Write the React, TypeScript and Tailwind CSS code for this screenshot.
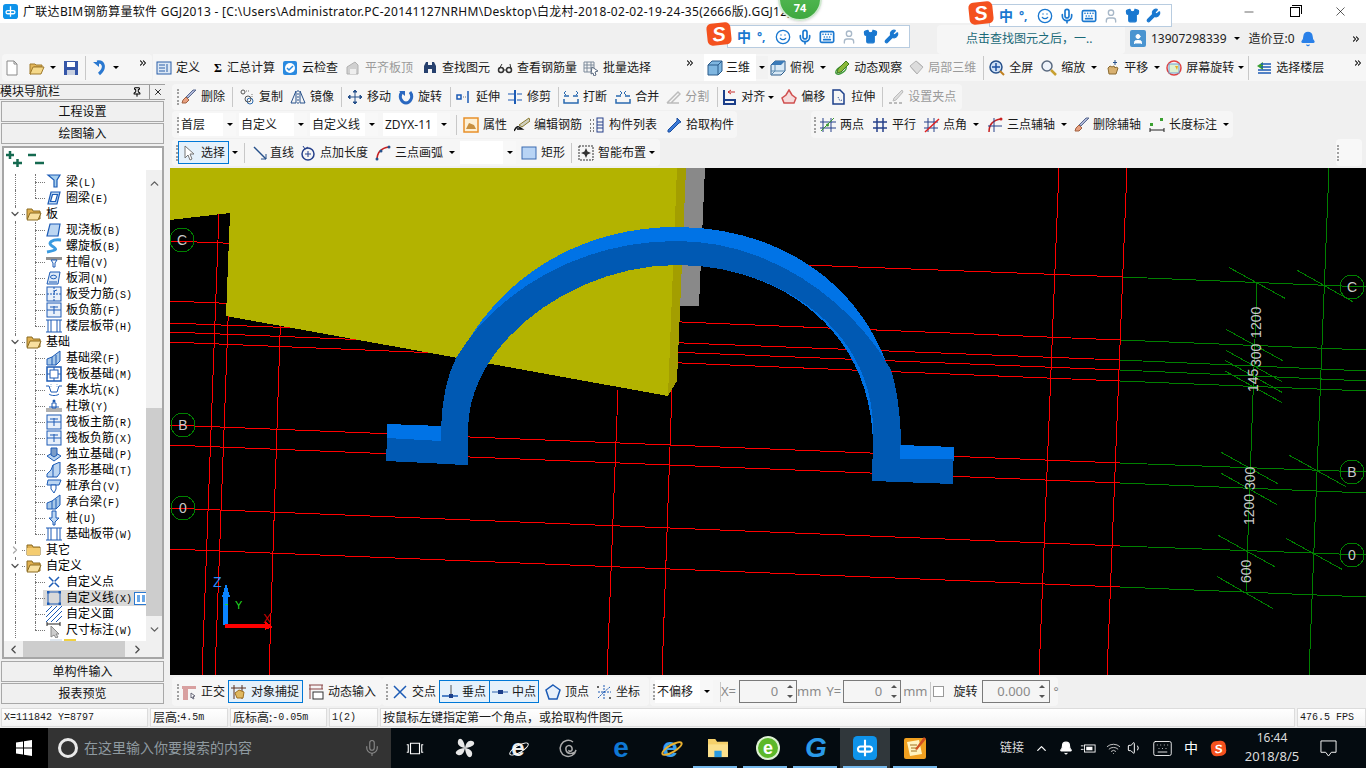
import React from 'react';
import clsx from 'clsx';
import { Mic, ChevronUp, ChevronDown, ChevronLeft, ChevronRight, ChevronsRight, Pin, X as XIcon, Minus, Bell, Wifi, Volume1, Keyboard, User, Shirt, Wrench, Smile } from 'lucide-react';

const Ic = ({ children, className }: { children: React.ReactNode; className?: string }) => (
  <svg viewBox="0 0 16 16" fill="none" className={clsx('w-4 h-4 shrink-0', className)}>{children}</svg>
);

const B = '#1c5bb5';
const Drop = ({ className }: { className?: string }) => (
  <span className={clsx('w-0 h-0 shrink-0 border-x-[3px] border-t-[3px] border-x-transparent border-t-black', className)} />
);
const Sep = ({ className }: { className?: string }) => <span className={clsx('w-px h-5 bg-[#c8c8c8] shrink-0', className)} />;
const Grip = ({ className }: { className?: string }) => <span className={clsx('h-4 border-l-2 border-dotted border-[#a0a0a0] shrink-0', className)} />;
const More = ({ className }: { className?: string }) => <ChevronsRight size={10} strokeWidth={2.5} className={clsx('shrink-0 self-start mt-1 text-black', className)} />;

const Tool = ({ icon, label, gray, className }: { icon?: React.ReactNode; label: string; gray?: boolean; className?: string }) => (
  <div className={clsx('flex items-center gap-1 shrink-0', gray ? 'text-[#9a9a9a]' : 'text-[#1a1a1a]', className)}>
    {icon}
    <span className="whitespace-nowrap">{label}</span>
  </div>
);

// app logo, white cross with a loop on each side
const Logo = ({ className }: { className: string }) => (
  <svg viewBox="0 0 16 16" className={className}>
    <rect width="16" height="16" rx="3" fill="#0e93ea" />
    <path d="M8 2.500V7H5A1.700 1.700 0 1 0 5 10.400H11A1.700 1.700 0 1 0 11 7H8V13.500" stroke="#fff" strokeWidth="1.400" fill="none" />
  </svg>
);

// ---- toolbar icons
const I = {
  page: <Ic className="ml-[2px]"><path d="M3 1h7l3 3v11H3z" fill="#fff" stroke="#8a8a8a" /><path d="M10 1v3h3" stroke="#8a8a8a" /></Ic>,
  open: <Ic className="ml-[9px]"><path d="M1 4h5l1 1h6v2H5L2 14H1z" fill="#e2b65a" stroke="#a07a2c" /><path d="M4 7h11l-3 7H1z" fill="#f5d98a" stroke="#a07a2c" /></Ic>,
  save: <Ic className="ml-[7px]"><rect x="1" y="1" width="14" height="14" fill="#3556a8" /><rect x="4" y="2" width="8" height="5" fill="#fff" /><rect x="4" y="10" width="8" height="5" fill="#c8d0e0" /></Ic>,
  undo: <Ic className="ml-[6px]"><path d="M5 2C12 1 14 8 7 14" stroke="#2a78d0" strokeWidth="3" /><path d="M1 2h6v5" fill="#2a78d0" /></Ic>,
  define: <Ic><rect x="1" y="2" width="14" height="12" fill="#dce8f5" stroke="#2a5fa8" /><path d="M3 5h6M3 8h6M3 11h6M11 4v8" stroke="#2a5fa8" /></Ic>,
  cloud: <Ic><rect x="1" y="1" width="14" height="14" rx="2" fill="#2a8ae0" /><circle cx="8" cy="8" r="5" fill="#fff" /><path d="M5 8l2 2 4-4" stroke="#2a8ae0" strokeWidth="1.5" /></Ic>,
  level: <Ic><path d="M2 14V7l8-5 3 3v9z" fill="#d0d0d0" stroke="#b0b0b0" /><path d="M5 9h6v5H5z" fill="#eee" /></Ic>,
  binoc: <Ic><path d="M2 13V6l2-4h2v11zM14 13V6l-2-4h-2v11z" fill="#26406e" /><rect x="6" y="5" width="4" height="4" fill="#26406e" /></Ic>,
  glass: <Ic><circle cx="4" cy="10" r="2.5" stroke="#333" strokeWidth="1.5" /><circle cx="12" cy="10" r="2.5" stroke="#333" strokeWidth="1.5" /><path d="M6 10h4M2 9l3-5M14 9l-1-5" stroke="#333" /></Ic>,
  batch: <Ic><path d="M1 2h10v10H1zM1 5h10M1 8h10M4 2v10M8 2v10" stroke="#7d8a9a" /><path d="M9 7l6 4-3 1 1 3-2 1-1-3-2 1z" fill="#fff" stroke="#5a6a80" /></Ic>,
  cube: <Ic><path d="M1 5l4-4h10v10l-4 4H1z" fill="#7fb6e0" stroke="#2a5a8a" /><path d="M1 5h10v10M11 5l4-4" stroke="#2a5a8a" /></Ic>,
  cubeTop: <Ic><path d="M1 5l4-4h10v10l-4 4H1z" fill="#d8e8f5" stroke="#2a5a8a" /><path d="M5 1v10H1M5 11l-4 4M5 11h10" stroke="#5a8ab0" /><path d="M1 5l4-4h10l-4 4z" fill="#3a7ab8" /></Ic>,
  orbit: <Ic><ellipse cx="7" cy="10" rx="6" ry="3" stroke="#3f9a3a" strokeWidth="1.5" transform="rotate(-35 7 10)" /><path d="M12 1l3 3-8 8-4 1 1-4z" fill="#8ab83a" stroke="#3f7a20" /></Ic>,
  cubeGray: <Ic><path d="M2 6l6-5 7 6-6 7z" fill="#dcdcdc" stroke="#b5b5b5" /><path d="M2 6l7 8M8 1l7 6" stroke="#b5b5b5" /></Ic>,
  zoomFull: <Ic><circle cx="7" cy="7" r="6" fill="#cfe0f5" stroke="#26508a" strokeWidth="1.5" /><path d="M7 3v8M3 7h8" stroke="#1c4fa0" strokeWidth="1.5" /><path d="M11 11l4 4" stroke="#c08020" strokeWidth="2" /></Ic>,
  zoom: <Ic><circle cx="6" cy="6" r="5" fill="#eef3fa" stroke="#5a6a80" strokeWidth="1.5" /><path d="M10 10l5 5" stroke="#c8a030" strokeWidth="2.5" /></Ic>,
  hand: <Ic><path d="M4 8l1 6h7l2-6-2-1-1 1-1-2-2 1-2-1z" fill="#d8b070" stroke="#8a6a30" /><path d="M11 0v5M9 2.500h4" stroke="#26508a" /></Ic>,
  screen: <Ic><circle cx="8" cy="8" r="7" stroke="#e04040" strokeWidth="1.5" /><rect x="3" y="4" width="10" height="9" fill="#dff0d0" stroke="#70a0d0" /><path d="M9 6l3 0-1 4z" fill="#e8b020" /></Ic>,
  floor: <Ic><path d="M1 6l6-4v8z" fill="#3aa030" /><path d="M5 4h10M5 7h10M2 10h13M2 13h13" stroke="#1c5bb5" strokeWidth="1.5" /></Ic>,
  brush: <Ic><path d="M15 1L7 9l-2-1 7-7z" fill="#b0b8d8" stroke="#5a6a90" /><path d="M5 8l3 3-3 3H1l1-3z" fill="#e8a080" stroke="#a06040" /></Ic>,
  copy: <Ic><circle cx="4" cy="3" r="2" stroke="#555" /><circle cx="11" cy="12" r="3" stroke="#2a6ab0" /><circle cx="9" cy="10" r="3" stroke="#555" /><path d="M7 2h4M13 5v3" stroke="#777" strokeDasharray="1 1" /></Ic>,
  mirror: <Ic><path d="M1 14L6 2v12zM15 14L10 2v12z" stroke="#26508a" /><path d="M8 1v14" stroke="#26508a" strokeDasharray="2 1" /></Ic>,
  move: <Ic><path d="M8 1v14M1 8h14M8 1L6 3h4zM8 15l-2-2h4zM1 8l2-2v4zM15 8l-2-2v4z" stroke="#26508a" fill="#26508a" /></Ic>,
  rotate: <Ic><path d="M4 3C0 8 4 14 8 14s8-6 4-11" stroke="#2a68c0" strokeWidth="3" /><path d="M1 2h6v5z" fill="#2a68c0" /></Ic>,
  extend: <Ic><path d="M1 6h4v4H1zM12 2v12" stroke="#1c5bb5" strokeWidth="1.5" /><path d="M7 8h4" stroke="#777" strokeDasharray="1 1" /></Ic>,
  trim: <Ic><path d="M8 1v14" stroke="#1c5bb5" strokeWidth="2" /><path d="M1 5h6M1 11h6M10 5h5M10 11h5" stroke="#1c5bb5" /></Ic>,
  breakI: <Ic><path d="M1 10v4h14v-4M1 7h5M10 7h5" stroke="#2a6ab0" strokeWidth="1.5" /><path d="M3 2L1 4l2 2M13 2l2 2-2 2" stroke="#2a6ab0" /></Ic>,
  merge: <Ic><path d="M1 10v4h14v-4M1 7h5M10 7h5" stroke="#2a6ab0" strokeWidth="1.5" /><path d="M5 2l2 2-2 2M11 2L9 4l2 2" stroke="#2a6ab0" /></Ic>,
  split: <Ic><path d="M2 14h12M2 14L13 3l2 2-9 9" stroke="#bcbcbc" strokeWidth="1.5" /></Ic>,
  align: <Ic><path d="M3 1v14h11v-4H3" stroke="#1c3f8a" strokeWidth="2" /><path d="M14 3H7l3-2M7 3l3 2" stroke="#c83030" /></Ic>,
  offset: <Ic><path d="M8 1l3 5 4 3-2 5H3L1 9l4-3z" stroke="#d05050" strokeWidth="1.500" fill="#f5dcdc" /></Ic>,
  stretch: <Ic><path d="M2 1h7l4 4v10H2z" stroke="#1c3f8a" strokeWidth="1.500" /><path d="M7 8l2 4M11 11l-2 1" stroke="#1c3f8a" strokeDasharray="1 1" /></Ic>,
  grab: <Ic><path d="M14 1l1 2-7 8-3 1 1-3z" fill="#ddd" stroke="#bbb" /><path d="M1 14h3M6 14h3M11 14h3" stroke="#bbb" strokeWidth="2" /></Ic>,
  prop: <Ic><rect x="1" y="1" width="14" height="14" fill="#fdf0d5" stroke="#e8902a" strokeWidth="1.500" /><path d="M3 12l3-6 5 2 2 4z" fill="#c89040" /></Ic>,
  pen: <Ic><path d="M15 1l1 3-8 6-3-2z" fill="#d0d0c0" stroke="#8a7a30" /><path d="M0 14c3-6 5-4 5-4l3 2H3" stroke="#111" strokeWidth="1.500" /></Ic>,
  list: <Ic><path d="M1 3h1M1 7h1M1 11h1M1 14h1M4 3h1M4 7h1M4 11h1M4 14h1" stroke="#555" strokeWidth="1.500" /><rect x="8" y="1" width="6" height="14" stroke="#26408a" /><path d="M8 5h6M8 8h6M8 11h6" stroke="#26408a" /></Ic>,
  picker: <Ic><path d="M11 1l4 4-2 1-1 1-8 8H2v-2l8-8 1-1z" fill="#3a7ad8" stroke="#1c4fa0" /></Ic>,
  twoPt: <Ic><path d="M3 1v14M11 1v14M0 5h16M0 11h16" stroke="#26408a" /><path d="M1 14L14 1" stroke="#3a9a30" /><circle cx="7.500" cy="8" r="1.500" fill="#3a9a30" /></Ic>,
  parallel: <Ic><path d="M5 1v14M11 1v14M1 5h14M1 11h14" stroke="#26408a" strokeWidth="1.500" /></Ic>,
  angle: <Ic><path d="M4 1v14M10 1v14M0 5h14M0 11h14" stroke="#26408a" /><path d="M1 15L15 2" stroke="#e02020" strokeWidth="1.500" /></Ic>,
  threeAxis: <Ic><path d="M2 15C2 7 6 3 14 2" stroke="#c82020" strokeWidth="1.500" /><path d="M7 1v14M1 9h14" stroke="#26408a" /><circle cx="14" cy="2" r="1.500" fill="#c82020" /></Ic>,
  dim: <Ic><path d="M1 11v4M15 11v4M1 13h14" stroke="#222" /><rect x="1" y="6" width="3" height="3" fill="#3aa030" /><rect x="11" y="1" width="3" height="3" fill="#3aa030" /></Ic>,
  cursor: <Ic><path d="M4 1v12l3-3 2 5 2-1-2-5h4z" fill="#fff" stroke="#777" /></Ic>,
  line: <Ic><path d="M2 2l12 12" stroke="#26508a" strokeWidth="1.500" /><path d="M14 14v-5M14 14H9" stroke="#26508a" /></Ic>,
  ptLen: <Ic><circle cx="8" cy="9" r="6" stroke="#26408a" strokeWidth="1.500" /><path d="M8 6v6M5 9h6" stroke="#26408a" /><path d="M3 1l2 3 3-2" stroke="#26408a" /></Ic>,
  arc: <Ic><path d="M2 15C2 8 6 3 14 2" stroke="#c82020" strokeWidth="1.500" /><circle cx="2" cy="14" r="1.500" fill="#26508a" /><circle cx="6" cy="6" r="1.500" fill="#26508a" /><circle cx="14" cy="2" r="1.500" fill="#26508a" /></Ic>,
  rectFill: <Ic><rect x="1" y="2" width="14" height="12" fill="#b8d4f5" stroke="#3a6ab0" /></Ic>,
  smart: <Ic><rect x="1" y="1" width="14" height="14" stroke="#333" strokeDasharray="2 1" /><path d="M8 3l1.500 3.500L13 8l-3.500 1.500L8 13l-1.500-3.500L3 8l3.500-1.500z" fill="#333" /></Ic>,
  ortho: <Ic><path d="M1 2h14v3H7v11H2V5H1z" fill="#d8a0a0" /><path d="M10 9l4 3-2 .5 1 2-1 .5-1-2-1 1z" fill="#fff" stroke="#667" /></Ic>,
  snap: <Ic><path d="M3 1v14M11 1v14M0 4h15" stroke="#5a3020" /><path d="M4 9l4-3 5 2-1 6H6z" fill="#dfb860" stroke="#a07020" /></Ic>,
  dyn: <Ic><path d="M1 1h14M1 5h14M2 1v14M14 1v4" stroke="#884444" /><rect x="5" y="8" width="10" height="7" fill="#fff" stroke="#333" /></Ic>,
  cross: <Ic><path d="M2 2l12 12M14 2L2 14" stroke="#1c5bb5" strokeWidth="1.500" /></Ic>,
  perp: <Ic><path d="M0 12h16" stroke="#1c5bb5" strokeWidth="1.500" /><path d="M9 1v11" stroke="#555" /><rect x="7" y="10" width="4" height="4" fill="#1c3f8a" /></Ic>,
  mid: <Ic><path d="M0 8h16" stroke="#6a90c8" strokeWidth="1.500" /><rect x="6" y="6" width="5" height="4" fill="#1c3f8a" /></Ic>,
  vertex: <Ic><path d="M8 1l7 5-3 9H4L1 6z" stroke="#1c5bb5" strokeWidth="1.500" fill="#e8f0fa" /></Ic>,
  coord: <Ic><path d="M8 1v14M2 8h13M2 14L8 8M14 3L8 8" stroke="#1c5bb5" strokeDasharray="2 1" /><circle cx="2" cy="3" r="1" fill="#333" /><circle cx="14" cy="14" r="1" fill="#333" /></Ic>,
};

// ---- tree icons
const Tb = ({ d, fill }: { d: string; fill?: string }) => (
  <Ic><path d={d} stroke={B} strokeWidth="1.200" fill={fill ?? '#dce9f8'} /></Ic>
);
const TI: Record<string, React.ReactNode> = {
  beam: <Tb d="M2 1h12l-3 5v7H8V6z" fill="#a8d0ee" />,
  ring: <Tb d="M5 2h9l-3 12H2zM6.500 4.500L4.500 11.500h5l2-7z" fill="#bcd6f2" />,
  slab: <Tb d="M4 2h10l-2 12H1z" fill="#bcd6f2" />,
  spiral: <Ic><path d="M15 2C6 1 1 5 6 8s6 4-5 6" stroke="#3a9ae0" strokeWidth="3" /></Ic>,
  cap: <Ic><rect x="0" y="3" width="16" height="3" fill="#909090" /><path d="M5 6h6l-2 3v4H7V9z" stroke={B} fill="#fff" /></Ic>,
  hole: <Ic><path d="M4 2h10l-2 12H1z" fill="#dce9f8" stroke={B} /><ellipse cx="7.500" cy="7" rx="3" ry="1.800" stroke={B} /><path d="M3 12h8" stroke={B} /></Ic>,
  force: <Ic><rect x="1" y="1" width="14" height="14" fill="#e8f0fa" stroke={B} /><path d="M1 8h14M8 1v14" stroke={B} strokeDasharray="2 1" /><path d="M11 4a3 3 0 0 0-3 3" stroke={B} /></Ic>,
  neg: <Ic><rect x="1" y="1" width="14" height="14" fill="#e8f0fa" stroke={B} /><path d="M1 8h14M8 4v8M4 5h8" stroke={B} /></Ic>,
  band: <Ic><path d="M0 2h16M0 14h16M5 2v12M11 2v12M2 2v12M14 2v12" stroke={B} /></Ic>,
  fbeam: <Ic><path d="M1 15V9l5-2 8-6v10l-4 4z" fill="#a8c8e8" stroke={B} /><path d="M6 7v8M10 5v10" stroke={B} /></Ic>,
  raft: <Ic><rect x="1" y="1" width="14" height="14" stroke={B} strokeWidth="1.500" /><rect x="4" y="4" width="8" height="8" stroke={B} /><path d="M1 8h3M12 8h3M8 1v3M8 12v3" stroke={B} /></Ic>,
  pit: <Ic><path d="M0 4h3l2 6h6l2-6h3M3 12c2 2 8 2 10 0" stroke={B} /><path d="M5 2v4M11 2v4" stroke="#8ab0d8" strokeDasharray="1 1" /></Ic>,
  pier: <Ic><rect x="0" y="10" width="16" height="4" fill="#b0b0b0" /><path d="M6 5h4v5H6zM3 9h10" stroke={B} /><circle cx="8" cy="3" r="1.500" fill={B} /></Ic>,
  iso: <Ic><path d="M1 10l7-4 7 4-7 5z" fill="#bcd6f2" stroke={B} /><path d="M5 9V2h6v7l-3 2z" fill="#7a9cc8" stroke={B} /></Ic>,
  stripf: <Ic><path d="M1 15v-3l4-4 2-5 7-3v11l-3 4z" fill="#bcd6f2" stroke={B} /><path d="M7 3v12" stroke={B} /></Ic>,
  pilecap: <Ic><path d="M2 2h13l-2 5H1z" fill="#bcd6f2" stroke={B} /><path d="M5 7h5v4l-2 4-3-4z" fill="#fff" stroke={B} /></Ic>,
  pile: <Ic><path d="M6 1h4v7h3l-4 4v3H7v-3L3 8h3z" fill="#bcd6f2" stroke={B} /></Ic>,
  point: <Ic><path d="M3 3l10 10M13 3L3 13" stroke={B} strokeWidth="1.500" /><circle cx="8" cy="8" r="1" fill="#fff" /></Ic>,
  rect: <Ic><rect x="2" y="2" width="12" height="12" stroke={B} /><rect x="1" y="1" width="2.500" height="2.500" fill={B} /><rect x="12.500" y="1" width="2.500" height="2.500" fill={B} /><rect x="1" y="12.500" width="2.500" height="2.500" fill={B} /><rect x="12.500" y="12.500" width="2.500" height="2.500" fill={B} /></Ic>,
  hatch: <Ic><path d="M0 6l6-6M0 11L11 0M0 16L16 0M5 16L16 5M10 16l6-6" stroke={B} /></Ic>,
  dimW: <Ic><path d="M1 0v4M14 0v4M1 2h13" stroke="#222" /><path d="M5 4v11l3-2 2 3 2-1-2-3h3z" fill="#ccc" stroke="#888" /></Ic>,
};

type Row = { name: string; key?: string; ic?: string; kind: 'child' | 'last' | 'open' | 'closed'; sel?: boolean };
const rows: Row[] = [
  { name: '梁', key: '(L)', ic: 'beam', kind: 'child' },
  { name: '圈梁', key: '(E)', ic: 'ring', kind: 'last' },
  { name: '板', kind: 'open' },
  { name: '现浇板', key: '(B)', ic: 'slab', kind: 'child' },
  { name: '螺旋板', key: '(B)', ic: 'spiral', kind: 'child' },
  { name: '柱帽', key: '(V)', ic: 'cap', kind: 'child' },
  { name: '板洞', key: '(N)', ic: 'hole', kind: 'child' },
  { name: '板受力筋', key: '(S)', ic: 'force', kind: 'child' },
  { name: '板负筋', key: '(F)', ic: 'neg', kind: 'child' },
  { name: '楼层板带', key: '(H)', ic: 'band', kind: 'last' },
  { name: '基础', kind: 'open' },
  { name: '基础梁', key: '(F)', ic: 'fbeam', kind: 'child' },
  { name: '筏板基础', key: '(M)', ic: 'raft', kind: 'child' },
  { name: '集水坑', key: '(K)', ic: 'pit', kind: 'child' },
  { name: '柱墩', key: '(Y)', ic: 'pier', kind: 'child' },
  { name: '筏板主筋', key: '(R)', ic: 'neg', kind: 'child' },
  { name: '筏板负筋', key: '(X)', ic: 'neg', kind: 'child' },
  { name: '独立基础', key: '(P)', ic: 'iso', kind: 'child' },
  { name: '条形基础', key: '(T)', ic: 'stripf', kind: 'child' },
  { name: '桩承台', key: '(V)', ic: 'pilecap', kind: 'child' },
  { name: '承台梁', key: '(F)', ic: 'fbeam', kind: 'child' },
  { name: '桩', key: '(U)', ic: 'pile', kind: 'child' },
  { name: '基础板带', key: '(W)', ic: 'band', kind: 'last' },
  { name: '其它', kind: 'closed' },
  { name: '自定义', kind: 'open' },
  { name: '自定义点', ic: 'point', kind: 'child' },
  { name: '自定义线', key: '(X)', ic: 'rect', kind: 'child', sel: true },
  { name: '自定义面', ic: 'hatch', kind: 'child' },
  { name: '尺寸标注', key: '(W)', ic: 'dimW', kind: 'last' },
];

const Folder = ({ open }: { open: boolean }) => (
  <Ic>
    <path d="M1 3h5l1 2h7v8H1z" fill="#e0b050" stroke="#8a6a20" />
    {open ? <path d="M4 7h11l-3 7H1z" fill="#f8e0a0" stroke="#8a6a20" /> : <path d="M1 6h13v7H1z" fill="#f4cc70" />}
  </Ic>
);

const TreeRow = ({ r }: { r: Row }) => {
  const folder = r.kind === 'open' || r.kind === 'closed';
  return (
    <div className="relative h-4 flex items-center">
      {/* dotted guides */}
      <span className="absolute left-[11px] top-0 h-full border-l border-dotted border-[#777]" />
      {!folder && <span className={clsx('absolute left-[31px] top-0 border-l border-dotted border-[#777]', r.kind === 'last' ? 'h-2' : 'h-full')} />}
      {!folder && <span className="absolute left-[31px] top-2 w-[10px] border-t border-dotted border-[#777]" />}
      {folder ? (
        <>
          <span className="absolute left-[11px] top-2 w-[10px] border-t border-dotted border-[#777]" />
          <span className="absolute left-[5px] bg-white">
            {r.kind === 'open' ? <ChevronDown size={12} strokeWidth={2.5} className="text-[#555]" /> : <ChevronRight size={12} strokeWidth={2.5} className="text-[#aaa]" />}
          </span>
          <div className="ml-[22px] flex items-center gap-1">
            <Folder open={r.kind === 'open'} />
            <span className="text-xs text-black">{r.name}</span>
          </div>
        </>
      ) : (
        <div className={clsx('ml-[39px] flex-1 h-4 flex items-center gap-1 pl-[3px]', r.sel && 'bg-[#d9d9d9]')}>
          {TI[r.ic!]}
          <span className="text-xs text-black whitespace-nowrap">
            {r.name}
            {r.key && <span className="font-['Liberation_Mono',monospace] text-[10px]">{r.key}</span>}
          </span>
          {r.sel && (
            <svg viewBox="0 0 13 13" className="w-[13px] h-[13px] shrink-0 -ml-[2px]">
              <rect x="0.500" y="0.500" width="12" height="12" fill="#fff" stroke="#2a78d0" />
              <path d="M3 3h3v7H3zM8 3h3v7H8z" fill="#6aa8e8" />
            </svg>
          )}
        </div>
      )}
    </div>
  );
};

const NavBtn = ({ label }: { label: string }) => (
  <div className="h-[21px] mx-px mb-px pt-px border border-[#a8a8a8] bg-[#f0f0f0] flex items-center justify-center text-xs text-[#111] shrink-0">{label}</div>
);

const SideBar = () => (
  <aside className="w-[170px] shrink-0 h-full pt-[3px] pb-[2px] flex flex-col">
    <div className="h-[16px] flex items-center border-y border-[#a0a0a0] text-xs text-[#111] mb-[1px] mr-[5px]">
      <span className="flex-1 leading-none">模块导航栏</span>
      <Pin size={10} strokeWidth={2.5} className="text-black mr-[7px]" />
      <span className="w-[16px] h-[14px] border-l border-[#999] flex items-center justify-center"><XIcon size={10} className="text-black" /></span>
    </div>
    <div className="mr-[5px] flex flex-col">
      <NavBtn label="工程设置" />
      <NavBtn label="绘图输入" />
    </div>
    <div className="flex-1 min-h-0 mt-px ml-[2px] mr-[6px] border-2 border-[#a6a6a6] bg-white flex flex-col">
      <div className="h-[22px] shrink-0 flex items-center gap-[4px] pl-[1px]">
        <svg viewBox="0 0 18 18" className="w-[18px] h-[18px]"><path d="M1 5h8M5 1v8M8 13h9M12.500 9v8" stroke="#156a50" strokeWidth="2.500" /></svg>
        <svg viewBox="0 0 18 18" className="w-[18px] h-[18px]"><path d="M1 5h8M8 13h9" stroke="#156a50" strokeWidth="2.500" /></svg>
      </div>
      <div className="flex-1 min-h-0 flex">
        <div className="flex-1 min-w-0 overflow-hidden pt-[4px]">
          {rows.map((r) => <TreeRow key={r.name} r={r} />)}
          <div className="h-4 ml-[46px] flex gap-[2px] pt-px"><span className="w-3 h-3 bg-[#e0e8f0]" /><span className="w-3 h-3 bg-[#f0d040]" /></div>
        </div>
        <div className="w-[16px] shrink-0 bg-[#f0f0f0] flex flex-col items-center">
          <ChevronUp size={13} strokeWidth={2.5} className="mt-[7px] text-[#606060]" />
          <div className="w-full flex-1 mt-[218px] mb-[7px] bg-[#cdcdcd]" />
          <ChevronDown size={13} strokeWidth={2.5} className="mb-[5px] text-[#606060]" />
        </div>
      </div>
      <div className="h-[16px] shrink-0 bg-[#f0f0f0] flex items-center">
        <ChevronLeft size={13} strokeWidth={2.5} className="ml-[3px] text-[#505050]" />
        <span className="ml-[3px] w-[102px] h-full bg-[#cdcdcd]" />
        <ChevronRight size={13} strokeWidth={2.5} className="ml-[6px] text-[#505050]" />
      </div>
    </div>
    <div className="mr-[5px] flex flex-col mt-[2px]">
      <NavBtn label="单构件输入" />
      <NavBtn label="报表预览" />
    </div>
  </aside>
);

const Combo = ({ label, className }: { label?: string; className: string }) => (
  <div className={clsx('h-[23px] bg-white flex items-center pl-[2px] shrink-0 relative', className)}>
    <span className="whitespace-nowrap">{label}</span>
    <span className="absolute right-0 top-0 h-full w-[13px] bg-[#f8f8f8] flex items-center justify-center"><Drop /></span>
  </div>
);

// three dimensional scene, a drawing with screen coordinates
const Scene = () => {
  const h: [number, number, number, number, number, number][] = [
    [170, 241, 1123, 277, 1366, 287],
    [170, 301, 1120, 340, 1366, 350],
    [170, 323, 1120, 360, 1366, 371],
    [170, 332, 1120, 370, 1366, 381],
    [170, 342, 1120, 381, 1366, 391],
    [170, 425, 1120, 463, 1366, 472],
    [170, 445, 1120, 483, 1366, 493],
    [170, 508, 1120, 546, 1366, 555],
    [170, 549, 1120, 587, 1366, 597],
  ];
  const v = [[202, 675, 219, 213], [215, 675, 232, 213], [269, 675, 284, 213], [607, 675, 618, 390], [662, 675, 672, 390], [1039, 675, 1059, 168], [1107, 675, 1127, 168]];
  const ticks = [[388, 293, 555, 385], [592, 301, 758, 395], [378, 478, 548, 572], [378, 541, 546, 635], [375, 571, 546, 667], [375, 603, 546, 698], [364, 847, 533, 941], [568, 856, 738, 950], [364, 910, 531, 1004], [355, 1096, 524, 1190], [558, 1105, 726, 1198], [352, 1220, 519, 1316]];
  const bubbles: [number, number, string][] = [[182, 240, 'C'], [183, 425, 'B'], [183, 508, '0'], [1352, 287, 'C'], [1352, 472, 'B'], [1352, 555, '0']];
  const dims: [number, number, string][] = [[1261, 330, '200'], [1261, 367, '300'], [1258, 392, '145'], [1255, 490, '300'], [1254, 525, '1200'], [1251, 583, '600'], [1261, 338, '1']];
  return (
    <svg viewBox="170 168 1196 507" className="w-full h-full block" shapeRendering="crispEdges">
      {h.map((l, i) => (
        <g key={i}>
          <line x1={l[0]} y1={l[1]} x2={l[2]} y2={l[3]} stroke="#ff0000" />
          <line x1={l[2]} y1={l[3]} x2={l[4]} y2={l[5]} stroke="#008000" />
        </g>
      ))}
      {v.map((l, i) => <line key={i} x1={l[0]} y1={l[1]} x2={l[2]} y2={l[3]} stroke="#ff0000" />)}
      <line x1="1329" y1="168" x2="1309" y2="675" stroke="#008000" />
      <line x1="1257" y1="283" x2="1246" y2="592" stroke="#008000" />
      {ticks.map((t, i) => <line key={i} x1={1100 + t[0] / 3} y1={170 + t[1] / 3} x2={1100 + t[2] / 3} y2={170 + t[3] / 3} stroke="#008000" />)}
      {bubbles.map(([x, y, s]) => (
        <g key={x + s}>
          <circle cx={x} cy={y} r="12" stroke="#008000" fill="none" />
          <text x={x} y={y + 5} textAnchor="middle" fontSize="14" fontFamily="Liberation Sans" fill="#c8c8c8" shapeRendering="auto">{s}</text>
        </g>
      ))}
      <path d="M686 168h19l-6 138h-19z" fill="#898989" />
      <path d="M170 168H677L668 396L226 316L230 213L170 220Z" fill="#b3b300" />
      <path d="M677 168h9l-9 213-9 15z" fill="#a39e00" />
      {dims.map(([x, y, s]) => (
        <text key={y} transform={`translate(${x} ${y}) rotate(-90)`} fontSize="14" fontFamily="Liberation Sans" fill="#c8c8c8" shapeRendering="auto">{s}</text>
      ))}
      {/* arc, light top face then dark side */}
      <path d="M441 428C443 340 530 227 677 227C800 227 900 310 901 445L873 445C872 330 780 265 677 265C575 265 470 340 468 428Z" fill="#0073e6" />
      <path d="M441 464V428C442 400 447 375 456 358C490 300 570 241 677 241C770 241 850 300 890 368C897 385 901 420 901 445V461H873V428C872 330 780 265 677 265C575 265 470 340 468 428V465Z" fill="#0059b3" />
      <path d="M387 424L441 426V441L387 438Z" fill="#0073e6" />
      <path d="M387 438L441 441 468 443V465L386 461Z" fill="#0059b3" />
      <path d="M900 445L954 447V461L900 459Z" fill="#0073e6" />
      <path d="M872 459H953V484L872 481Z" fill="#0059b3" />
      {/* axis */}
      <path d="M223 625V597H222L226 583 230 597H228V625Z" fill="#0a84ff" />
      <path d="M225 624L265 624 265 621 273 627 265 630V628L225 628Z" fill="#ff0000" />
      <line x1="225" y1="604" x2="228" y2="604" stroke="#22dd22" />
      <text x="213" y="587" fontSize="14" fontFamily="Liberation Sans" fill="#2a8cff" shapeRendering="auto">Z</text>
      <text x="235" y="609" fontSize="11" fontFamily="Liberation Sans" fill="#22dd22" shapeRendering="auto">Y</text>
      <text x="263" y="623" fontSize="12" fontFamily="Liberation Sans" fill="#cc0000" shapeRendering="auto">X</text>
    </svg>
  );
};

const SLogo = ({ className }: { className?: string }) => (
  <span className={clsx('w-[24px] h-[22px] rounded-[5px] -rotate-6 bg-[#f4511e] flex items-center justify-center text-white font-bold italic text-[20px] leading-none font-["Liberation_Sans",sans-serif] shrink-0', className)}>S</span>
);

const Ime = ({ className }: { className: string }) => (
  <div className={clsx('absolute flex items-start', className)}>
    <SLogo className="z-10" />
    <div className="-ml-[4px] mt-[2px] w-[183px] h-[23px] border border-[#b8cce0] bg-white/95 flex items-center gap-[6px] pl-[9px] text-[#1a78d0]">
      <span className="text-sm font-bold leading-none">中</span>
      <span className="text-xs font-bold leading-none w-3">°,</span>
      <Smile size={16} strokeWidth={2} />
      <Mic size={16} strokeWidth={2.5} />
      <Keyboard size={16} strokeWidth={2.5} />
      <User size={16} className="text-[#a8b8c8]" />
      <Shirt size={15} fill="#1a78d0" />
      <Wrench size={15} fill="#1a78d0" />
    </div>
  </div>
);

const Btn = ({ icon, label, className }: { icon: React.ReactNode; label: string; className?: string }) => (
  <div className={clsx('h-[23px] border border-[#0078d7] bg-[#e5f1fb] flex items-center gap-1 pl-[2px] shrink-0', className)}>{icon}<span className="whitespace-nowrap">{label}</span></div>
);

const Spin = ({ value, className }: { value: string; className: string }) => (
  <div className={clsx('h-[23px] border border-[#7a7a7a] bg-[#f5f5f5] flex items-center justify-end shrink-0', className)}>
    <span className="text-[#8a8a8a] text-[13px] pr-[5px]">{value}</span>
    <span className="w-[13px] h-full flex flex-col items-center justify-center gap-[7px]">
      <span className="w-0 h-0 border-x-[3px] border-b-[3px] border-x-transparent border-b-[#555]" />
      <span className="w-0 h-0 border-x-[3px] border-t-[3px] border-x-transparent border-t-[#555]" />
    </span>
  </div>
);

const Cell = ({ children, className }: { children: React.ReactNode; className: string }) => (
  <div className={clsx('h-full border border-[#dcdcdc] bg-gradient-to-b from-white to-[#f4f4f4] flex items-center pl-[2px] whitespace-nowrap shrink-0', className)}>{children}</div>
);
const M = ({ children }: { children: React.ReactNode }) => <span className="font-['Liberation_Mono',monospace] text-[10px]">{children}</span>;

const TaskCell = ({ children, on, active }: { children: React.ReactNode; on?: boolean; active?: boolean }) => (
  <div className={clsx('relative w-[50px] h-full flex items-center justify-center shrink-0', active && 'bg-[#30373b]')}>
    {children}
    {on && <span className="absolute bottom-0 left-[3px] right-[3px] h-[2px] bg-[#76b9ed]" />}
  </div>
);

export default function App() {
  return (
    <div className="relative w-[1366px] h-[768px] overflow-hidden bg-[#f0f0f0] flex flex-col text-xs text-[#1a1a1a] font-['Noto_Sans','Noto_Sans_CJK_SC',sans-serif]">
      {/* title bar */}
      <div className="h-[23px] bg-white flex items-center shrink-0">
        <Logo className="w-[15px] h-[15px] ml-[3px] shrink-0" />
        <span className="ml-[5px] text-[#111] whitespace-nowrap tracking-[0.3px]">广联达BIM钢筋算量软件 GGJ2013 - [C:\Users\Administrator.PC-20141127NRHM\Desktop\白龙村-2018-02-02-19-24-35(2666版).GGJ12]</span>
        <div className="ml-auto flex items-center">
          <Minus size={14} strokeWidth={1} className="mr-[34px] text-black" />
          <span className="relative w-[10px] h-[10px] border border-black mr-[33px]"><span className="absolute -top-[3px] left-[1px] w-[10px] h-[9px] border-t border-r border-black" /></span>
          <XIcon size={15} strokeWidth={1} className="mr-[18px] text-black" />
        </div>
      </div>

      {/* floating widgets over the title area */}
      <div className="absolute left-[778px] -top-[23px] w-[44px] h-[44px] rounded-full bg-gradient-to-b from-[#5cc25c] to-[#3fa83f] border-2 border-[#cfe8cf] shadow flex items-end justify-center pb-[6px] text-white text-[11px] font-bold leading-none">74</div>
      <Ime className="left-[707px] top-[23px]" />
      <Ime className="left-[969px] top-[2px]" />

      {/* account row */}
      <div className="h-[31px] shrink-0 flex items-center justify-end">
        <div className="w-[188px] h-[29px] mt-[1px] bg-[#f6f6f6] rounded-sm flex items-center pl-[29px] text-[#1a6a78] whitespace-nowrap">点击查找图元之后，一..</div>
        <div className="w-[241px] flex items-center pl-[5px] whitespace-nowrap">
          <span className="w-[16px] h-[17px] rounded-[2px] bg-[#4a94d0] flex items-center justify-center shrink-0"><User size={12} fill="#fff" className="text-white" /></span>
          <span className="ml-[5px] text-xs text-[#222]">13907298339</span>
          <Drop className="ml-[7px]" />
          <span className="ml-[9px] text-[#222]">造价豆:0</span>
          <Bell size={16} fill="#2a80e8" className="ml-[5px] text-[#2a80e8] shrink-0" />
          <More className="ml-[35px] -mt-[4px]" />
        </div>
      </div>

      {/* main tool bar */}
      <div className="h-[27px] shrink-0 flex items-stretch">
        <div className="w-[150px] ml-[2px] bg-[#f6f6f6] rounded-sm flex items-center shrink-0">
          {I.page}
          {I.open}
          <Drop className="ml-[5px]" />
          {I.save}
          <Sep className="ml-[6px] h-[24px]" />
          {I.undo}
          <Drop className="ml-[5px]" />
          <More className="ml-[19px]" />
        </div>
        <div className="ml-px flex-1 bg-[#f6f6f6] flex items-center">
          <Tool icon={I.define} label="定义" className="ml-[3px] mr-[14px]" />
          <Tool icon={<span className="w-[9px] font-bold text-[12px] text-black font-['Liberation_Serif',serif]">Σ</span>} label="汇总计算" className="mr-[7px]" />
          <Tool icon={I.cloud} label="云检查" className="mr-[7px]" />
          <Tool icon={I.level} label="平齐板顶" gray className="mr-[9px]" />
          <Tool icon={I.binoc} label="查找图元" className="mr-[7px]" />
          <Tool icon={I.glass} label="查看钢筋量" className="mr-[6px]" />
          <Tool icon={I.batch} label="批量选择" className="mr-[34px]" />
          <More className="mr-[9px]" />
          <div className="h-full bg-white flex items-center pl-[3px] shrink-0 w-[52px]">
            <Tool icon={I.cube} label="三维" className="gap-[3px]" />
          </div>
          <span className="w-[12px] h-[23px] bg-[#f2f2f2] flex items-center justify-center mr-[2px]"><Drop /></span>
          <Tool icon={I.cubeTop} label="俯视" className="mr-[6px]" />
          <Drop className="mr-[8px]" />
          <Tool icon={I.orbit} label="动态观察" className="mr-[6px]" />
          <Tool icon={I.cubeGray} label="局部三维" gray className="mr-[7px]" />
          <Sep className="h-[24px] mr-[5px]" />
          <Tool icon={I.zoomFull} label="全屏" className="mr-[8px]" />
          <Tool icon={I.zoom} label="缩放" className="mr-[6px]" />
          <Drop className="mr-[7px]" />
          <Tool icon={I.hand} label="平移" className="mr-[6px]" />
          <Drop className="mr-[6px]" />
          <Tool icon={I.screen} label="屏幕旋转" className="mr-[4px]" />
          <Drop className="mr-[4px]" />
          <Sep className="h-[24px] mr-[7px]" />
          <Tool icon={I.floor} label="选择楼层" />
          <More className="ml-auto mr-[3px]" />
        </div>
      </div>

      {/* main area */}
      <div className="flex-1 min-h-0 flex">
        <SideBar />
        <div className="flex-1 min-w-0 h-full pt-[3px] pl-[2px] flex flex-col">
          <div className="h-[26px] mb-px shrink-0 flex">
            <div className="w-[790px] bg-[#f6f6f6] rounded-sm flex items-center pl-[5px]">
              <Grip className="mr-[2px]" />
              <Tool icon={I.brush} label="删除" className="mr-[7px]" />
              <Sep className="mr-[6px]" />
              <Tool icon={I.copy} label="复制" className="mr-[7px]" />
              <Tool icon={I.mirror} label="镜像" className="mr-[7px]" />
              <Sep className="mr-[5px]" />
              <Tool icon={I.move} label="移动" className="mr-[7px]" />
              <Tool icon={I.rotate} label="旋转" className="mr-[8px]" />
              <Sep className="mr-[5px]" />
              <Tool icon={I.extend} label="延伸" className="mr-[7px]" />
              <Tool icon={I.trim} label="修剪" className="mr-[7px]" />
              <Sep className="mr-[4px]" />
              <Tool icon={I.breakI} label="打断" className="mr-2" />
              <Tool icon={I.merge} label="合并" className="mr-[6px]" />
              <Tool icon={I.split} label="分割" gray className="mr-[8px]" />
              <Sep className="mr-[3px]" />
              <Tool icon={I.align} label="对齐" className="mr-[3px]" />
              <Drop className="mr-[7px]" />
              <Tool icon={I.offset} label="偏移" className="mr-[6px]" />
              <Tool icon={I.stretch} label="拉伸" className="mr-[7px]" />
              <Sep className="mr-[5px]" />
              <Tool icon={I.grab} label="设置夹点" gray />
            </div>
          </div>
          <div className="h-[27px] mb-px shrink-0 flex">
            <div className="w-[565px] bg-[#f6f6f6] rounded-sm flex items-center pl-[5px] shrink-0">
              <Grip />
              <Combo label="首层" className="w-[57px] mr-[3px] pl-[1px]" />
              <Combo label="自定义" className="w-[68px] mr-[3px] pl-[1px]" />
              <Combo label="自定义线" className="w-[68px] mr-[5px]" />
              <Combo label="ZDYX-11" className="w-[67px] mr-[6px]" />
              <Sep className="mr-[6px]" />
              <Tool icon={I.prop} label="属性" className="mr-[7px]" />
              <Tool icon={I.pen} label="编辑钢筋" className="mr-[7px]" />
              <Tool icon={I.list} label="构件列表" className="mr-[9px]" />
              <Tool icon={I.picker} label="拾取构件" />
            </div>
            <div className="ml-[74px] w-[422px] bg-[#f6f6f6] rounded-sm flex items-center pl-[3px] shrink-0">
              <Grip className="mr-[4px]" />
              <Tool icon={I.twoPt} label="两点" className="mr-2" />
              <Tool icon={I.parallel} label="平行" className="mr-2" />
              <Tool icon={I.angle} label="点角" className="mr-[6px] gap-[3px]" />
              <Drop className="mr-[8px]" />
              <Tool icon={I.threeAxis} label="三点辅轴" className="mr-[6px]" />
              <Drop className="mr-[7px]" />
              <Tool icon={I.brush} label="删除辅轴" className="mr-[8px] gap-[3px]" />
              <Tool icon={I.dim} label="长度标注" className="mr-[6px]" />
              <Drop />
            </div>
          </div>
          <div className="h-[27px] mb-[2px] shrink-0 flex">
            <div className="w-[488px] bg-[#f6f6f6] rounded-sm flex items-center pl-[4px] shrink-0">
              <Grip />
              <Btn icon={I.cursor} label="选择" className="w-[51px]" />
              <Drop className="ml-[3px] mr-[6px]" />
              <Sep className="mr-[7px]" />
              <Tool icon={I.line} label="直线" className="mr-[6px] gap-[2px]" />
              <Tool icon={I.ptLen} label="点加长度" className="mr-[7px]" />
              <Tool icon={I.arc} label="三点画弧" className="mr-[6px]" />
              <Drop className="mr-[5px]" />
              <Combo className="w-[56px] mr-[5px]" />
              <Tool icon={I.rectFill} label="矩形" className="mr-[6px]" />
              <Sep className="mr-[6px]" />
              <Tool icon={I.smart} label="智能布置" className="mr-[3px]" />
              <Drop />
            </div>
            <div className="ml-auto mr-[4px] w-[26px] bg-[#f8f8f8] rounded-sm flex items-center pl-px"><Grip /></div>
          </div>
          <div className="flex-1 min-h-0 bg-black -ml-[2px] w-[1196px]"><Scene /></div>
          {/* bottom tool bar */}
          <div className="h-[32px] shrink-0 pt-[2px] pb-px flex">
            <div className="w-[210px] bg-[#f6f6f6] rounded-sm flex items-center pl-[5px] shrink-0">
              <Grip className="mr-[2px]" />
              <Tool icon={I.ortho} label="正交" className="mr-[3px]" />
              <Btn icon={I.snap} label="对象捕捉" className="w-[75px] mr-[5px] gap-0" />
              <Tool icon={I.dyn} label="动态输入" />
            </div>
            <div className="w-[267px] bg-[#f6f6f6] rounded-sm flex items-center pl-[4px] shrink-0">
              <Grip className="mr-[4px]" />
              <Tool icon={I.cross} label="交点" className="mr-[3px]" />
              <Btn icon={I.perp} label="垂点" className="w-[51px]" />
              <Btn icon={I.mid} label="中点" className="w-[50px] -ml-px mr-[6px]" />
              <Tool icon={I.vertex} label="顶点" className="mr-[7px]" />
              <Tool icon={I.coord} label="坐标" />
            </div>
            <div className="ml-px w-[408px] bg-[#f6f6f6] rounded-sm flex items-center pl-[3px] shrink-0 whitespace-nowrap">
              <Grip />
              <Combo label="不偏移" className="w-[58px] mr-[7px]" />
              <Sep />
              <span className="text-[13px] text-[#8a8a8a] mr-[3px]">X=</span>
              <Spin value="0" className="w-[58px]" />
              <span className="text-[13px] text-[#8a8a8a] mr-[5px]">mm</span>
              <span className="text-[13px] text-[#8a8a8a] mr-[2px]">Y=</span>
              <Spin value="0" className="w-[58px]" />
              <span className="text-[13px] text-[#8a8a8a] ml-[2px] mr-[3px]">mm</span>
              <Sep className="mr-[2px]" />
              <span className="w-[11px] h-[11px] border border-[#999] bg-white mr-[9px] shrink-0" />
              <span className="mr-[4px]">旋转</span>
              <Spin value="0.000" className="w-[68px]" />
              <span className="text-[#888] ml-[4px]">°</span>
            </div>
          </div>
        </div>
      </div>

      {/* status bar */}
      <div className="h-[21px] shrink-0 flex gap-[2px] pl-px py-px">
        <Cell className="w-[147px]"><M>X=111842 Y=8797</M></Cell>
        <Cell className="w-[78px]">层高:<M>4.5m</M></Cell>
        <Cell className="w-[97px]">底标高:<M>-0.05m</M></Cell>
        <Cell className="w-[49px]"><M>1(2)</M></Cell>
        <Cell className="w-[915px]">按鼠标左键指定第一个角点，或拾取构件图元</Cell>
        <Cell className="flex-1"><M>476.5 FPS</M></Cell>
      </div>

      {/* windows task bar */}
      <div className="h-[40px] shrink-0 bg-[#040b10] flex items-stretch text-white">
        <div className="w-[48px] bg-black flex items-center justify-center shrink-0">
          <svg viewBox="0 0 16 16" className="w-4 h-4"><path d="M0 2.500l7-1v6H0zM8 1.300l8-1.300v7.500H8zM0 8.500h7v6l-7-1zM8 8.500h8V16l-8-1.200z" fill="#fff" /></svg>
        </div>
        <div className="w-[343px] bg-[#333] flex items-center shrink-0">
          <span className="ml-[10px] w-[20px] h-[20px] rounded-full border-[3px] border-[#e8e8e8] shrink-0" />
          <span className="ml-[6px] text-sm text-[#8f9aa0]">在这里输入你要搜索的内容</span>
          <Mic size={18} strokeWidth={1.5} className="ml-auto mr-[10px] text-[#888]" />
        </div>
        <div className="flex items-stretch -ml-px">
          <TaskCell><svg viewBox="0 0 24 16" className="w-[18px] h-[13px]"><path d="M6 1h12v14H6zM1 3h2v10H1M23 3h-2v10h2" stroke="#fff" strokeWidth="1.500" fill="none" /></svg></TaskCell>
          <TaskCell><svg viewBox="0 0 20 20" className="w-5 h-5"><path d="M10 10C5 9 2 7 3 3s6-3 7 7zM10 10c1-5 3-8 7-7s3 6-7 7zM10 10c5 1 8 3 7 7s-6 3-7-7zM10 10c-1 5-3 8-7 7s-3-6 7-7z" fill="#e8e8e8" /></svg></TaskCell>
          <TaskCell><span className="relative ml-[6px] text-[#eee] text-[24px] font-bold leading-none font-['Liberation_Sans',sans-serif]">e<span className="absolute -left-[3px] top-[9px] w-[22px] h-[8px] rounded-[50%] border border-white -rotate-30" /></span></TaskCell>
          <TaskCell><svg viewBox="0 0 20 20" className="w-5 h-5 ml-[6px]"><path d="M15 4a8 8 0 1 0 3 8c-1 4-9 5-10 0s5-6 6-2-4 4-3 2" stroke="#aaa" strokeWidth="1.500" fill="none" /></svg></TaskCell>
          <TaskCell><span className="ml-[12px] text-[#0f78d4] text-[28px] font-bold leading-none font-['Liberation_Sans',sans-serif]">e</span></TaskCell>
          <TaskCell><span className="relative ml-[10px] text-[#3aa0f0] text-[28px] font-bold leading-none font-['Liberation_Sans',sans-serif]">e<span className="absolute left-[-2px] top-[10px] w-[24px] h-[9px] rounded-[50%] border-2 border-[#e8b030] -rotate-30" /></span></TaskCell>
          <TaskCell on><svg viewBox="0 0 24 22" className="w-[22px] h-5 ml-[6px]"><path d="M1 1h8l2 3h12v17H1z" fill="#f5d06a" /><path d="M1 7h22v14H1z" fill="#fbe08c" /><path d="M8 14h8v7H8z" fill="#2a9ae0" /></svg></TaskCell>
          <TaskCell on><span className="ml-[6px] w-[24px] h-[24px] rounded-full bg-[#5cb82a] border-2 border-white/80 flex items-center justify-center text-white text-[18px] font-bold leading-none font-['Liberation_Sans',sans-serif]">e</span></TaskCell>
          <TaskCell on><span className="ml-[2px] text-[#2a9ae8] text-[28px] font-bold italic leading-none font-['Liberation_Sans',sans-serif]">G</span></TaskCell>
          <TaskCell on active><Logo className="w-[24px] h-[24px]" /></TaskCell>
          <TaskCell on><svg viewBox="0 0 24 24" className="w-6 h-6"><rect x="1" y="2" width="22" height="21" rx="2" fill="#f0a020" /><path d="M4 6l12-2 3 14-12 2z" fill="#fff3c0" /><path d="M7 9h7M8 12h7M8 15h6" stroke="#a07020" /><path d="M21 1l2 2-9 11-2-1z" fill="#d05020" /></svg></TaskCell>
        </div>
        <div className="flex-1 flex items-center min-w-0">
          <span className="ml-[60px] text-xs text-[#ddd] whitespace-nowrap">链接</span>
          <ChevronUp size={15} className="ml-[10px] shrink-0" />
          <Bell size={14} fill="#fff" className="ml-[10px] shrink-0" />
          <svg viewBox="0 0 18 12" className="ml-[7px] w-[16px] h-[11px] shrink-0"><path d="M1 3h3M1 7h3" stroke="#fff" /><rect x="5" y="2" width="12" height="8" stroke="#fff" fill="none" /><rect x="7" y="4" width="7" height="4" fill="#fff" /></svg>
          <Wifi size={15} strokeWidth={1.500} className="ml-[10px] text-[#ccc] shrink-0" />
          <Volume1 size={16} strokeWidth={1.500} className="ml-[6px] shrink-0" />
          <Keyboard size={21} strokeWidth={1} className="ml-[9px] shrink-0" />
          <span className="ml-[11px] text-sm">中</span>
          <SLogo className="ml-[13px] !w-[15px] !h-[15px] !text-[12px] rounded-[3px]" />
          <div className="ml-[16px] w-[60px] flex flex-col items-center text-[#ddd] text-[13px] leading-[20px] whitespace-nowrap shrink-0">
            <span className="text-xs">16:44</span>
            <span>2018/8/5</span>
          </div>
          <svg viewBox="0 0 18 18" className="ml-[18px] w-[17px] h-[17px] shrink-0"><path d="M1 1h16v12h-5l-3 4-3-4H1z" stroke="#fff" fill="none" /></svg>
        </div>
      </div>
    </div>
  );
}
